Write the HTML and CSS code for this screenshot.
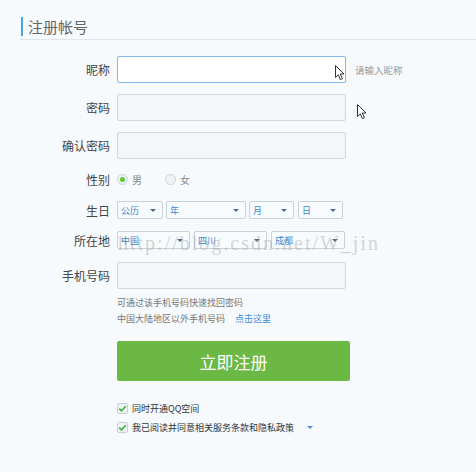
FILE: index.html
```html
<!DOCTYPE html>
<html lang="zh">
<head>
<meta charset="utf-8">
<title>注册帐号</title>
<link rel="stylesheet" href="styles.css">
</head>
<body>
<div class="page">
  <div class="title"><span class="bar"></span><span class="title-text">注册帐号</span></div>
  <div class="form">
    <div class="row row-input">
      <span class="label">昵称</span>
      <div class="input input-focus"></div>
      <span class="tip">请输入昵称</span>
    </div>
    <div class="row row-input">
      <span class="label">密码</span>
      <div class="input"></div>
    </div>
    <div class="row row-input">
      <span class="label">确认密码</span>
      <div class="input"></div>
    </div>
    <div class="row row-gender">
      <span class="label">性别</span>
      <div class="radios">
        <span class="radio radio-on"><span class="dot"></span></span><span class="radio-text">男</span>
        <span class="radio radio-2"></span><span class="radio-text">女</span>
      </div>
    </div>
    <div class="row row-select">
      <span class="label">生日</span>
      <div class="selects">
        <div class="select w46"><span>公历</span><i class="caret"></i></div>
        <div class="select w80"><span>年</span><i class="caret"></i></div>
        <div class="select w45"><span>月</span><i class="caret"></i></div>
        <div class="select w45 gap4"><span>日</span><i class="caret"></i></div>
      </div>
    </div>
    <div class="row row-select row-loc">
      <span class="label">所在地</span>
      <div class="selects loc">
        <div class="select w73"><span>中国</span><i class="caret"></i></div>
        <div class="select w73"><span>四川</span><i class="caret"></i></div>
        <div class="select w74"><span>成都</span><i class="caret"></i></div>
      </div>
    </div>
    <div class="row row-input row-phone">
      <span class="label">手机号码</span>
      <div class="input"></div>
    </div>
    <div class="hints">
      <p class="hint">可通过该手机号码快速找回密码</p>
      <p class="hint">中国大陆地区以外手机号码<a class="link">点击这里</a></p>
    </div>
    <button class="submit" type="button">立即注册</button>
    <div class="checks">
      <div class="check-row">
        <span class="checkbox"><svg viewBox="0 0 11 11" width="11" height="11"><path d="M2.2 5.6 L4.4 7.8 L8.8 3.2" fill="none" stroke="#3fb53b" stroke-width="1.6"/></svg></span>
        <span class="check-text">同时开通QQ空间</span>
      </div>
      <div class="check-row">
        <span class="checkbox"><svg viewBox="0 0 11 11" width="11" height="11"><path d="M2.2 5.6 L4.4 7.8 L8.8 3.2" fill="none" stroke="#3fb53b" stroke-width="1.6"/></svg></span>
        <span class="check-text">我已阅读并同意相关服务条款和隐私政策</span>
        <i class="caret caret-blue"></i>
      </div>
    </div>
  </div>
  <div class="watermark">http://blog.csdn.net/W_jin</div>
  <svg class="cursor cursor-1" width="11" height="16" viewBox="0 0 11 16"><path d="M0.5 0.5 L0.5 12.5 L3.3 9.8 L5.4 14.6 L7.4 13.7 L5.3 9 L9 9 Z" fill="#fff" stroke="#333" stroke-width="1" stroke-linejoin="round"/></svg>
  <svg class="cursor cursor-2" width="11" height="16" viewBox="0 0 11 16"><path d="M0.5 0.5 L0.5 12.5 L3.3 9.8 L5.4 14.6 L7.4 13.7 L5.3 9 L9 9 Z" fill="#fff" stroke="#333" stroke-width="1" stroke-linejoin="round"/></svg>
</div>
</body>
</html>
```

FILE: styles.css
```css
* { box-sizing: border-box; }
html, body { margin: 0; padding: 0; }
body {
  background: #f6fafd;
  font-family: "Noto Sans CJK SC", "Noto Sans", "Liberation Sans", sans-serif;
  color: #444;
}
.page {
  position: relative;
  width: 476px;
  height: 472px;
  overflow: hidden;
}
.title {
  display: flex;
  align-items: center;
  margin-left: 20px;
  padding: 17px 0 3px 1px;
  border-bottom: 1px solid #dfe5ea;
}
.bar {
  width: 2px;
  height: 19px;
  background: #4aa3e0;
  margin-right: 5px;
}
.title-text {
  font-size: 15px;
  line-height: 19px;
  color: #666;
}
.form {
  padding-top: 16px;
}
.row {
  display: flex;
  align-items: center;
}
.label {
  width: 110px;
  padding-right: 0;
  margin-right: 7px;
  text-align: right;
  font-size: 12px;
  color: #444;
  flex: none;
}
.row-input { height: 27px; margin-bottom: 11px; }
.input {
  width: 229px;
  height: 27px;
  border: 1px solid #cfd8df;
  border-radius: 2px;
  background: #f3f7fa;
}
.input-focus {
  background: #fff;
  border-color: #84b5ec;
}
.tip {
  margin-left: 9px;
  font-size: 9.5px;
  color: #999;
}
.row-gender { height: 18px; margin-bottom: 13px; }
.radios { display: flex; align-items: center; }
.radio {
  width: 11px;
  height: 11px;
  border-radius: 50%;
  border: 1px solid #cdd4da;
  background: #eef2f5;
  display: flex;
  align-items: center;
  justify-content: center;
}
.dot {
  width: 5px;
  height: 5px;
  border-radius: 50%;
  background: #5fc83a;
}
.radio-2 { margin-left: 23px; }
.radio-text {
  margin-left: 4px;
  font-size: 10px;
  color: #888;
}
.row-select { height: 18px; margin-bottom: 12px; }
.row-loc { margin-bottom: 13px; }
.selects { display: flex; gap: 3px; }
.selects.loc { gap: 4px; }
.gap4 { margin-left: 1px; }
.select {
  height: 18px;
  border: 1px solid #c8d2db;
  border-radius: 2px;
  background: #f8fbfd;
  display: flex;
  align-items: center;
  justify-content: space-between;
  padding: 0 6px 0 3px;
  font-size: 9px;
  color: #3a88cc;
}
.w46 { width: 46px; }
.w80 { width: 80px; }
.w45 { width: 45px; }
.w73 { width: 73px; }
.w74 { width: 74px; }
.caret {
  width: 0;
  height: 0;
  border-left: 3px solid transparent;
  border-right: 3px solid transparent;
  border-top: 3px solid #4f6a86;
}
.row-phone { margin-bottom: 0; }
.hints {
  margin-left: 117px;
  padding-top: 6px;
}
.hint {
  margin: 0;
  font-size: 9px;
  line-height: 16px;
  color: #777;
}
.link {
  margin-left: 10px;
  color: #3a8fd8;
}
.submit {
  display: block;
  margin: 14px 0 0 117px;
  width: 233px;
  height: 40px;
  border: none;
  border-radius: 2px;
  background: #6bb844;
  color: #fff;
  font-family: "Noto Sans CJK SC", "Noto Sans", sans-serif;
  font-size: 17px;
  padding: 0;
}
.checks {
  margin: 22px 0 0 117px;
  display: flex;
  flex-direction: column;
  gap: 8px;
}
.check-row {
  display: flex;
  align-items: center;
  height: 11px;
}
.checkbox {
  width: 11px;
  height: 11px;
  border: 1px solid #c9d1d8;
  border-radius: 2px;
  background: #eef2f5;
  display: flex;
  align-items: center;
  justify-content: center;
  position: relative;
}
.checkbox svg { position: absolute; left: -1px; top: -1px; }
.check-text {
  margin-left: 4px;
  font-size: 9px;
  color: #333;
}
.caret-blue {
  margin-left: 13px;
  border-top-color: #4a8fd0;
}
.watermark {
  position: absolute;
  left: 118px;
  top: 232px;
  font-family: "Liberation Serif", serif;
  font-size: 20px;
  letter-spacing: 2px;
  color: rgba(150, 150, 150, 0.4);
  white-space: nowrap;
  pointer-events: none;
}
.cursor { position: absolute; }
.cursor-1 { left: 335px; top: 65px; }
.cursor-2 { left: 357px; top: 104px; }
```
